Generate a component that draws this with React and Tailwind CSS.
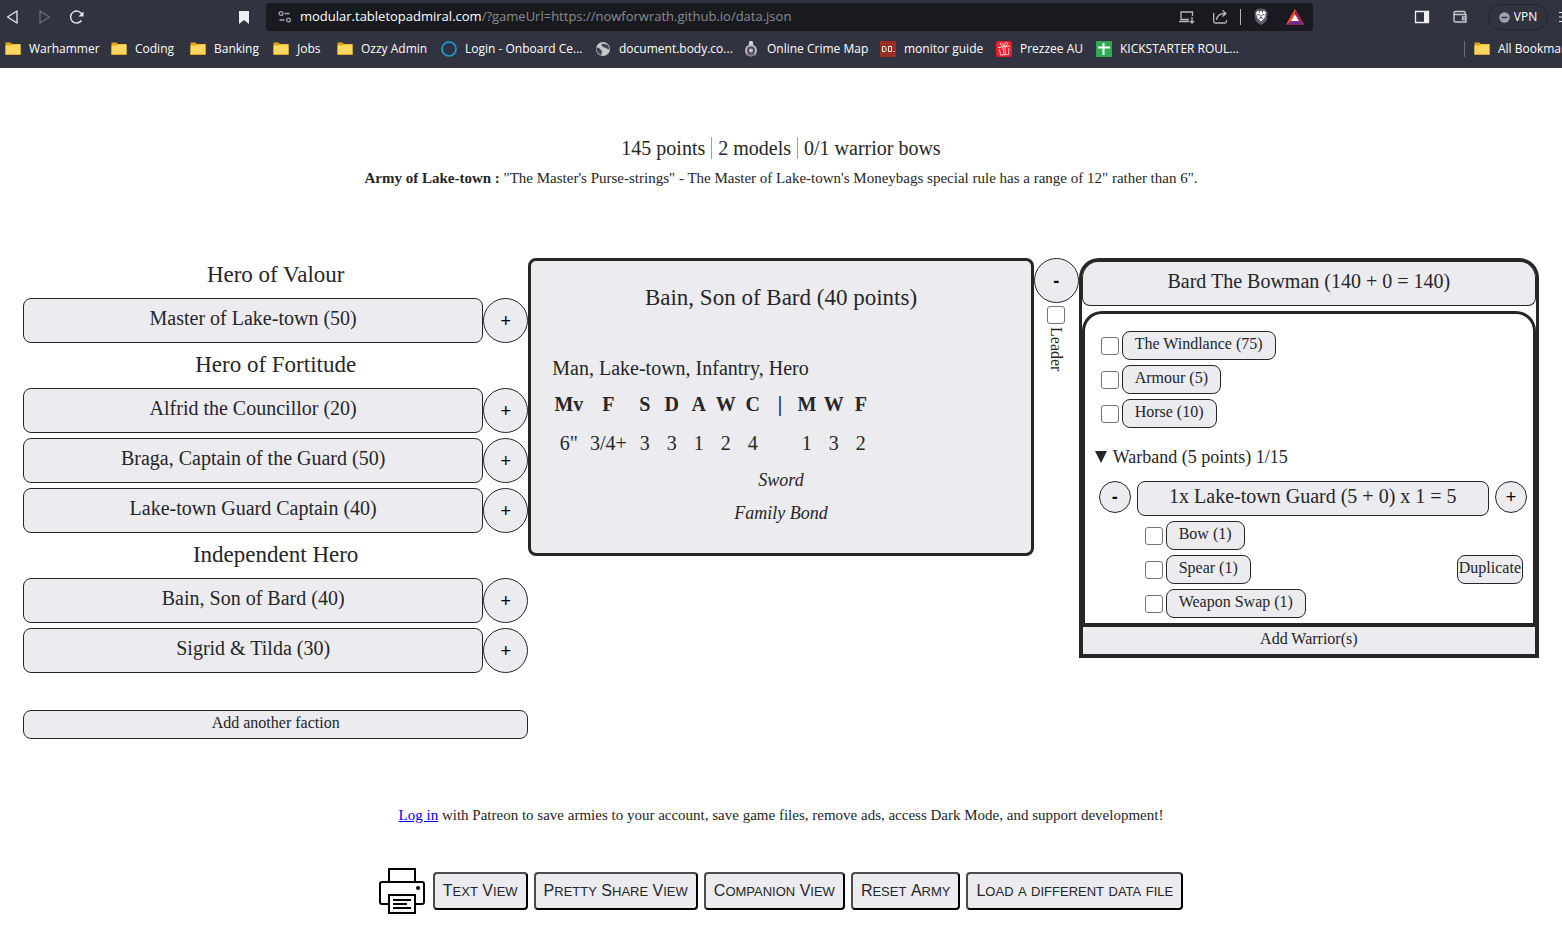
import React from "react";

const bookmarks = [
  { label: "Warhammer", icon: "folder" },
  { label: "Coding", icon: "folder" },
  { label: "Banking", icon: "folder" },
  { label: "Jobs", icon: "folder" },
  { label: "Ozzy Admin", icon: "folder" },
  { label: "Login - Onboard Ce...", icon: "ring" },
  { label: "document.body.co...", icon: "globe" },
  { label: "Online Crime Map", icon: "badge" },
  { label: "monitor guide", icon: "do" },
  { label: "Prezzee AU", icon: "gift" },
  { label: "KICKSTARTER ROUL...", icon: "sheet" },
];

function BookmarkIcon({ name }) {
  const common = { width: 16, height: 16, viewBox: "0 0 16 16", className: "shrink-0", "aria-hidden": true };
  if (name === "folder")
    return (
      <svg {...common}>
        <path d="M.5 1.500h5l1.500 1.500h8.500v10.500H.5z" fill="#e5a50e" />
        <path d="M.5 4.500h5L7 3.500h8.500v10H.5z" fill="#ffd75e" />
        <path d="M.5 13.500h15" stroke="#e0a92a" />
      </svg>
    );
  if (name === "ring")
    return (
      <svg {...common}>
        <circle cx="8" cy="8" r="7" fill="none" stroke="#12a5e4" strokeWidth="1.6" />
      </svg>
    );
  if (name === "globe")
    return (
      <svg {...common}>
        <circle cx="8" cy="8" r="7" fill="#c6c7ca" />
        <path d="M1.5 6.500c2 .2 3.500.8 4 2s1.500 1 1.500 2-.8 1.500-.6 3.800A7 7 0 0 1 1.500 6.500zM8 2.500c-1 1-1.600 1.200-1.400 2.200s2 .6 2.400 1.600 2 .4 2.800 1.300 1.500.4 2.700.6a7 7 0 0 0-3-5.200c-.8.8-2 .2-3.500-.5z" fill="#41434e" />
      </svg>
    );
  if (name === "badge")
    return (
      <svg {...common}>
        <path d="M5.500 4 6.500 0h3l1 4z" fill="#d4d4dc" />
        <circle cx="8" cy="9.5" r="6" fill="#b9b9c6" />
        <circle cx="8" cy="9.5" r="4" fill="#4a4a5e" />
        <circle cx="8" cy="9.5" r="2" fill="#c8bfc4" />
        <path d="M3 14h10" stroke="#7b6570" strokeWidth="1.5" />
      </svg>
    );
  if (name === "do")
    return (
      <svg {...common}>
        <rect width="16" height="16" fill="#9c2d24" />
        <path d="M2.500 5.500H5l1 1v3l-1 1H2.500zM8.500 5.500h3v5h-3z" fill="none" stroke="#fff" />
        <rect x="13.500" y="10" width="1" height="1" fill="#fff" />
      </svg>
    );
  if (name === "gift")
    return (
      <svg {...common}>
        <rect width="16" height="16" rx="2" fill="#ec1c2b" />
        <path d="M2 6.500 14 5M3.500 8l1 6 8-.5.500-6.500M7 6.500l1 7M9 6l.5 7.500M8 5.500C4 5 3 2 5 2s3 3.500 3 3.500 0-4 2.500-4S11.500 5 8 5.500" fill="none" stroke="#ffd4d4" />
      </svg>
    );
  return (
    <svg {...common}>
      <rect width="16" height="16" rx="1" fill="#31a853" />
      <path d="M2 6.500h12M7.500 2v12" stroke="#fff" strokeWidth="2" />
    </svg>
  );
}

function BrowserBar() {
  return (
    <header className="h-[68px] overflow-hidden whitespace-nowrap bg-[#313341] font-['Open_Sans',sans-serif] text-xs text-white">
      <div className="flex h-[34px] items-center">
        <div className="flex w-[266px] shrink-0 items-center pl-1">
          <button aria-label="Back" className="mr-4">
            <svg width="16" height="16" viewBox="0 0 16 16" fill="none" stroke="#e9e9ec" strokeWidth="1.3" strokeLinejoin="round"><path d="M13 2v12L3.500 8z" /></svg>
          </button>
          <button aria-label="Forward" className="mr-4">
            <svg width="16" height="16" viewBox="0 0 16 16" fill="none" stroke="#6b6d79" strokeWidth="1.3" strokeLinejoin="round"><path d="M4 2v12l9.500-6z" /></svg>
          </button>
          <button aria-label="Reload">
            <svg width="18" height="18" viewBox="0 0 18 18" fill="none" stroke="#e9e9ec" strokeWidth="1.4"><path d="M13.500 12.500A6 6 0 1 1 14.200 7" /><path d="M15.500 3.500v5h-5z" fill="#e9e9ec" stroke="none" /></svg>
          </button>
          <button aria-label="Bookmark this page" className="ml-auto mr-4">
            <svg width="12" height="16" viewBox="0 0 12 16" fill="#efeff0"><path d="M1 2h10v13l-5-4-5 4z" /></svg>
          </button>
        </div>
        <div className="flex h-7 min-w-0 flex-1 items-center rounded bg-[#181a20] pr-2">
          <svg className="ml-3 shrink-0" width="14" height="14" viewBox="0 0 14 14" fill="none" stroke="#a2a3a9" strokeWidth="1.3"><circle cx="3" cy="3.5" r="1.9" /><path d="M6.500 3.500h5M1.500 10h5" /><circle cx="10.5" cy="10" r="1.9" /></svg>
          <div className="ml-2 min-w-0 flex-1 text-[13px] text-[#8b8c92]"><span className="text-white">modular.tabletopadmiral.com</span>/?gameUrl=https://nowforwrath.github.io/data.json</div>
          <div className="flex shrink-0 items-center">
            <svg className="mr-4" width="18" height="16" viewBox="0 0 18 16" fill="none" stroke="#b5b6ba" strokeWidth="1.3"><path d="M14.500 7V3H3v8M1 12.500h10M3 10.500h8M14 8v6M12 12l2 2 2-2" /></svg>
            <svg width="16" height="16" viewBox="0 0 16 16" fill="none" stroke="#b5b6ba" strokeWidth="1.3"><path d="M1.700 4v8.500c0 1 .5 1.500 1.500 1.500H13c1 0 1.500-.5 1.500-1.500V11M4.500 11C5 7 7.500 4.500 13 4.500M10.500 1.500l3.500 3-3.500 3" /></svg>
            <span className="ml-3 h-4 w-px bg-[#b5b6ba]" />
            <svg className="ml-3" width="16" height="18" viewBox="0 0 16 18"><path d="M8 .5 12 1l2.500 3-.5 7c-.3 2-3 4.500-6 6-3-1.500-5.700-4-6-6L1.500 4 4 1z" fill="#5a5c69" /><path d="M4.500 3h7l1.500 2-1.500 5L8 13.500 4.500 10 3 5z" fill="#fff" /><path d="M4.500 6.500 7 7M11.500 6.500 9 7M8 7v3M6 10.500l2-1 2 1M6.500 3v1.500M9.500 3v1.500" stroke="#4a4c58" fill="none" /></svg>
            <svg className="ml-4" width="20" height="18" viewBox="0 0 20 18"><path d="M10 1 1 16.500h18z" fill="#ff4724" /><path d="M10 1l9 15.500L10 11z" fill="#9e1f63" /><path d="M1 16.500 10 11l9 5.500z" fill="#662d91" /><path d="M10 6.500 6 13h8z" fill="#fff" /></svg>
          </div>
        </div>
        <div className="flex w-[249px] shrink-0 items-center overflow-hidden">
          <svg className="ml-[101px] shrink-0" width="16" height="14" viewBox="0 0 16 14"><path d="M1.500 1.500h13v11h-13z" fill="none" stroke="#efeff0" strokeWidth="1.3" /><path d="M10 1h5v12h-5z" fill="#efeff0" /></svg>
          <svg className="ml-[22px] shrink-0" width="16" height="16" viewBox="0 0 16 16" fill="none" stroke="#c9cad0" strokeWidth="1.4"><path d="M13 5.500v-2c0-.6-.4-1-1-1H3.500C2.500 2.500 2 3 2 4s.5 1.500 1.500 1.500H14V13H3.500C2.500 13 2 12.500 2 11.500V4M14 8h-3.500v2.500H14" /></svg>
          <button className="ml-5 flex h-[26px] w-[60px] shrink-0 items-center justify-center gap-1 rounded-full border border-[#23252f]">
            <svg width="11" height="11" viewBox="0 0 11 11"><circle cx="5.5" cy="5.5" r="5.2" fill="#a0a1b5" /><path d="M2.500 5.500h6" stroke="#313341" strokeWidth="1.5" /></svg>
            VPN
          </button>
          <svg className="ml-2.5 shrink-0" width="16" height="12" viewBox="0 0 16 12" stroke="#e9e9ec" strokeWidth="1.2"><path d="M1 1.500h14M1 6h14M1 10.500h14" /></svg>
        </div>
      </div>
      <nav className="flex h-[30px] items-center pl-[5px]" aria-label="Bookmarks">
        <div className="grid grid-cols-[106px_79px_83px_64px_104px_154px_148px_137px_116px_100px_140px]">
          {bookmarks.map((b) => (
            <a key={b.label} href="#" className="flex items-center gap-2">
              <BookmarkIcon name={b.icon} />
              {b.label}
            </a>
          ))}
        </div>
        <div className="ml-auto flex w-[98px] shrink-0 items-center overflow-hidden">
          <span className="mr-[9px] h-4 w-px shrink-0 bg-[#6b6d79]" />
          <a href="#" className="flex items-center gap-2"><BookmarkIcon name="folder" />All Bookmarks</a>
        </div>
      </nav>
    </header>
  );
}

const groups = [
  { title: "Hero of Valour", heroes: ["Master of Lake-town (50)"] },
  { title: "Hero of Fortitude", heroes: ["Alfrid the Councillor (20)", "Braga, Captain of the Guard (50)", "Lake-town Guard Captain (40)"] },
  { title: "Independent Hero", heroes: ["Bain, Son of Bard (40)", "Sigrid & Tilda (30)"] },
];

function RoundButton({ children, label, small }) {
  return (
    <button
      aria-label={label}
      className={`shrink-0 rounded-full border border-[#262626] bg-[#ebebf0] font-['Liberation_Sans',sans-serif] text-lg leading-5 text-black ${small ? "size-8" : "size-[45px]"}`}
    >
      {children}
    </button>
  );
}

function HeroList() {
  return (
    <section>
      {groups.map((g) => (
        <div key={g.title}>
          <h2 className="h-10 text-center text-[23px] leading-[34px]">{g.title}</h2>
          {g.heroes.map((h) => (
            <div key={h} className="mb-[5px] flex">
              <button className="h-[45px] flex-1 rounded-lg border border-[#262626] bg-[#ebebf0] pb-1.5 text-xl">{h}</button>
              <RoundButton label={`Add ${h}`}>+</RoundButton>
            </div>
          ))}
        </div>
      ))}
      <button className="mt-8 h-[29px] w-full rounded-lg border border-[#262626] bg-[#ebebf0] pb-1 text-base leading-5">Add another faction</button>
    </section>
  );
}

const stats = [
  ["Mv", "6\""], ["F", "3/4+"], ["S", "3"], ["D", "3"], ["A", "1"], ["W", "2"],
  ["C", "4"], ["|", ""], ["M", "1"], ["W", "3"], ["F", "2"],
];

function StatCard() {
  return (
    <section className="h-[298px] rounded-lg border-3 border-[#262626] bg-[#ebebf0] px-[21px] pt-5">
      <h2 className="text-center text-[23px] leading-[34px]">Bain, Son of Bard (40 points)</h2>
      <p className="mt-[39px] text-xl leading-7">Man, Lake-town, Infantry, Hero</p>
      <table className="table-fixed text-center text-xl">
        <colgroup>
          {stats.map((_, i) => (
            <col key={i} className={i === 0 ? "w-[33px]" : i === 1 ? "w-[46px]" : "w-[27px]"} />
          ))}
        </colgroup>
        <thead>
          <tr className="h-11">
            {stats.map(([name], i) => <th key={i} className="p-0 font-bold">{name}</th>)}
          </tr>
        </thead>
        <tbody>
          <tr className="h-[34px]">
            {stats.map(([, value], i) => <td key={i} className="p-0">{value}</td>)}
          </tr>
        </tbody>
      </table>
      <div className="mt-1 text-center text-lg leading-[33px] italic">
        <p>Sword</p>
        <p>Family Bond</p>
      </div>
    </section>
  );
}

const boxClass = "size-[18px] shrink-0 appearance-none rounded-[3px] border border-[#767676] bg-white checked:bg-blue-600";

function Option({ id, children }) {
  return (
    <div className="flex h-[29px] items-center gap-[3px]">
      <input id={id} type="checkbox" className={boxClass} />
      <label htmlFor={id} className="h-full rounded-lg border border-[#262626] bg-[#ebebf0] px-3 text-base leading-6">{children}</label>
    </div>
  );
}

function ArmyCard() {
  return (
    <section className="flex items-start">
      <div className="flex w-[45px] shrink-0 flex-col items-center">
        <RoundButton label="Remove Bard The Bowman"><b>-</b></RoundButton>
        <input id="leader" type="checkbox" className={`${boxClass} mt-[3px]`} />
        <label htmlFor="leader" className="mt-[3px] text-base leading-5 [writing-mode:vertical-rl]">Leader</label>
      </div>
      <div className="min-w-0 flex-1 rounded-t-[20px] border-4 border-x-3 border-[#262626] bg-white">
        <button className="h-11 w-full rounded-t-2xl rounded-b-lg border border-t-0 border-[#262626] bg-[#ebebf0] pb-1.5 text-xl">Bard The Bowman (140 + 0 = 140)</button>
        <div className="mt-[5px] rounded-t-[20px] border-3 border-b-4 border-[#262626] pt-[17px] pr-1.5 pb-[5px] pl-2.5">
          <div className="flex flex-col gap-[5px] pl-1.5">
            <Option id="windlance">The Windlance (75)</Option>
            <Option id="armour">Armour (5)</Option>
            <Option id="horse">Horse (10)</Option>
          </div>
          <details open className="mt-4">
            <summary className="flex h-[26px] list-none items-center gap-1.5 text-lg leading-6">
              <svg width="12" height="12" viewBox="0 0 12 12" fill="#262626" aria-hidden="true"><path d="M0 0h12L6 12z" /></svg>
              <span>Warband (5 points) 1/15</span>
            </summary>
            <div className="mt-[11px] flex items-start gap-1.5 pl-1">
              <RoundButton small label="Fewer Lake-town Guards"><b>-</b></RoundButton>
              <button className="h-[35px] min-w-0 flex-1 rounded-lg border border-[#262626] bg-[#ebebf0] pb-1.5 text-xl leading-[26px]">1x Lake-town Guard (5 + 0) x 1 = 5</button>
              <RoundButton small label="More Lake-town Guards">+</RoundButton>
            </div>
            <div className="mt-[5px] flex items-center justify-between pr-1 pl-[50px]">
              <div className="flex flex-col gap-[5px]">
                <Option id="bow">Bow (1)</Option>
                <Option id="spear">Spear (1)</Option>
                <Option id="swap">Weapon Swap (1)</Option>
              </div>
              <button className="h-[29px] rounded-lg border border-[#262626] bg-[#ebebf0] px-px pb-1 text-base leading-5">Duplicate</button>
            </div>
          </details>
        </div>
        <button className="block h-[27px] w-full border-x border-[#262626] bg-[#ebebf0] pb-1 text-base leading-5">Add Warrior(s)</button>
      </div>
    </section>
  );
}

const actions = ["Text View", "Pretty Share View", "Companion View", "Reset Army", "Load a different data file"];

function ActionButton({ label }) {
  return (
    <button className="h-[38px] rounded border-2 border-t-[#4c4c4c] border-r-black border-b-black border-l-[#4c4c4c] bg-[#ebebf0] px-2 font-['Liberation_Sans',sans-serif] text-base">
      {label.split(" ").map((word, i) => (
        <React.Fragment key={i}>
          {i > 0 && " "}
          <span className={`inline-block text-[13px] uppercase ${/^[A-Z]/.test(word) ? "first-letter:text-base" : ""}`}>{word}</span>
        </React.Fragment>
      ))}
    </button>
  );
}

export default function App() {
  return (
    <div className="min-h-screen bg-white">
      <BrowserBar />
      <main className="px-[23px] pt-[66px] pb-7 font-['Liberation_Serif',serif] text-[#262626]">
        <div className="flex items-center justify-center gap-1.5 text-xl leading-7">
          <span>145 points</span>
          <span className="h-[22px] w-px bg-gray-400" />
          <span>2 models</span>
          <span className="h-[22px] w-px bg-gray-400" />
          <span>0/1 warrior bows</span>
        </div>
        <p className="mt-1.5 text-center text-[15px] leading-5">
          <b>Army of Lake-town :</b> "The Master's Purse-strings" - The Master of Lake-town's Moneybags special rule has a range of 12" rather than 6".
        </p>
        <div className="mt-[70px] grid grid-cols-3 items-start">
          <HeroList />
          <StatCard />
          <ArmyCard />
        </div>
        <p className="mt-16 text-center text-[15px] leading-6">
          <a href="#" className="text-[#0000ee] underline">Log in</a> with Patreon to save armies to your account, save game files, remove ads, access Dark Mode, and support development!
        </p>
        <div className="mt-[41px] flex items-center justify-center gap-1.5">
          <button aria-label="Print" className="mr-0.5">
            <svg width="46" height="46" viewBox="0 0 46 46" fill="none" stroke="#000" strokeWidth="2">
              <path d="M10 14V1h26v13" />
              <path d="M10 36H3a2 2 0 0 1-2-2V16a2 2 0 0 1 2-2h40a2 2 0 0 1 2 2v18a2 2 0 0 1-2 2h-7" />
              <path d="M10 27h26v18H10zM14 32h18M14 36h14M14 40h18" />
              <circle cx="39" cy="20" r="2" fill="#000" stroke="none" />
            </svg>
          </button>
          {actions.map((a) => <ActionButton key={a} label={a} />)}
        </div>
      </main>
    </div>
  );
}
